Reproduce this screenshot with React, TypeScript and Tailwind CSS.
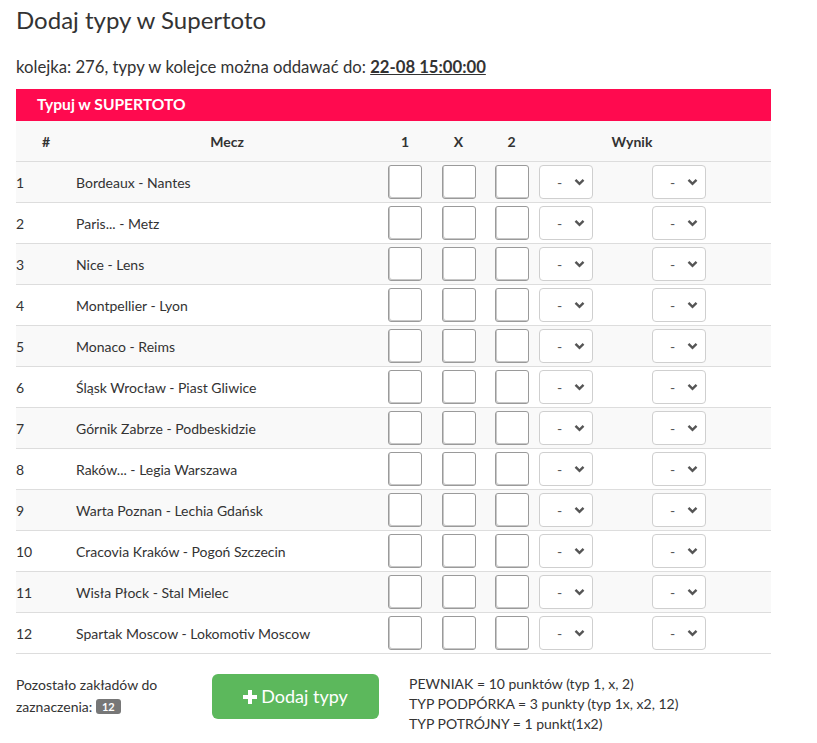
import React from "react";

const matches = [
  "Bordeaux - Nantes",
  "Paris... - Metz",
  "Nice - Lens",
  "Montpellier - Lyon",
  "Monaco - Reims",
  "Śląsk Wrocław - Piast Gliwice",
  "Górnik Zabrze - Podbeskidzie",
  "Raków... - Legia Warszawa",
  "Warta Poznan - Lechia Gdańsk",
  "Cracovia Kraków - Pogoń Szczecin",
  "Wisła Płock - Stal Mielec",
  "Spartak Moscow - Lokomotiv Moscow",
];

const grid = "grid grid-cols-[60px_302px_54px_53px_53px_188px_45px]";

function Box() {
  return (
    <div className="flex justify-center">
      <div className="w-[34px] h-[34px] bg-white border border-[#9a9a9a] rounded-[3px] shadow-[inset_1px_-1px_0_#c8c8c8]" />
    </div>
  );
}

function Sel() {
  return (
    <div className="w-[54px] h-[34px] bg-white border border-[#cfcfcf] rounded-[4px] flex items-center pl-[17px] pr-[7px] justify-between text-[14px] text-[#555]">
      <span>-</span>
      <svg width="11" height="8" viewBox="0 0 11 8">
        <path d="M1.5 1.8 L5.5 5.8 L9.5 1.8" fill="none" stroke="#555" strokeWidth="2.4" />
      </svg>
    </div>
  );
}

export default function App() {
  return (
    <div
      className="bg-white min-h-[743px] pl-4 text-[#333]"
      style={{ fontFamily: "Lato, 'Open Sans', sans-serif" }}
    >
      <h1 className="pt-[7px] text-[24px] leading-[26px] font-normal text-[#333]">Dodaj typy w Supertoto</h1>
      <p className="mt-[24px] text-[16.7px] leading-[20px]">
        kolejka: 276, typy w kolejce można oddawać do:{" "}
        <span className="font-bold underline">22-08 15:00:00</span>
      </p>
      <div className="w-[755px] mt-[12px]">
        <div className="h-[32px] bg-[#ff0a4f] text-white font-bold text-[15.6px] flex items-center pl-[21px]">
          Typuj w SUPERTOTO
        </div>
        <div className={`${grid} h-[40px] items-center bg-[#f9f9f9] font-bold text-[14px]`}>
          <div className="text-center">#</div>
          <div className="text-center">Mecz</div>
          <div className="text-center">1</div>
          <div className="text-center">X</div>
          <div className="text-center">2</div>
          <div className="text-center">Wynik</div>
          <div />
        </div>
        {matches.map((m, i) => (
          <div
            key={i}
            className={`${grid} h-[41px] items-center border-t border-[#dddddd] text-[14px] ${
              i % 2 === 0 ? "bg-[#f9f9f9]" : "bg-white"
            } ${i === matches.length - 1 ? "border-b h-[42px]" : ""}`}
          >
            <div>{i + 1}</div>
            <div>{m}</div>
            <Box />
            <Box />
            <Box />
            <div className="flex items-center pl-px">
              <Sel />
              <div className="ml-[59px]">
                <Sel />
              </div>
            </div>
            <div />
          </div>
        ))}
      </div>
      <div className="flex mt-[26px] text-[14px]">
        <div className="w-[196px] leading-[22px] mt-[-6px]">
          <div>Pozostało zakładów do</div>
          <div>
            zaznaczenia:{" "}
            <span className="inline-block bg-[#777] text-white font-bold text-[11px] leading-[15px] px-[6px] rounded-[3px] align-[1px]">
              12
            </span>
          </div>
        </div>
        <div className="w-[167px] h-[45px] bg-[#5cb85c] rounded-[6px] flex items-center justify-center text-white text-[18px] mt-[-6px]">
          <svg width="14" height="14" viewBox="0 0 14 14" className="mr-[4px]">
            <path d="M5 0h4v5h5v4H9v5H5V9H0V5h5z" fill="white" />
          </svg>
          Dodaj typy
        </div>
        <div className="ml-[30px] leading-[20px] mt-[-6px]">
          <div>PEWNIAK = 10 punktów (typ 1, x, 2)</div>
          <div>TYP PODPÓRKA = 3 punkty (typ 1x, x2, 12)</div>
          <div>TYP POTRÓJNY = 1 punkt(1x2)</div>
        </div>
      </div>
    </div>
  );
}
